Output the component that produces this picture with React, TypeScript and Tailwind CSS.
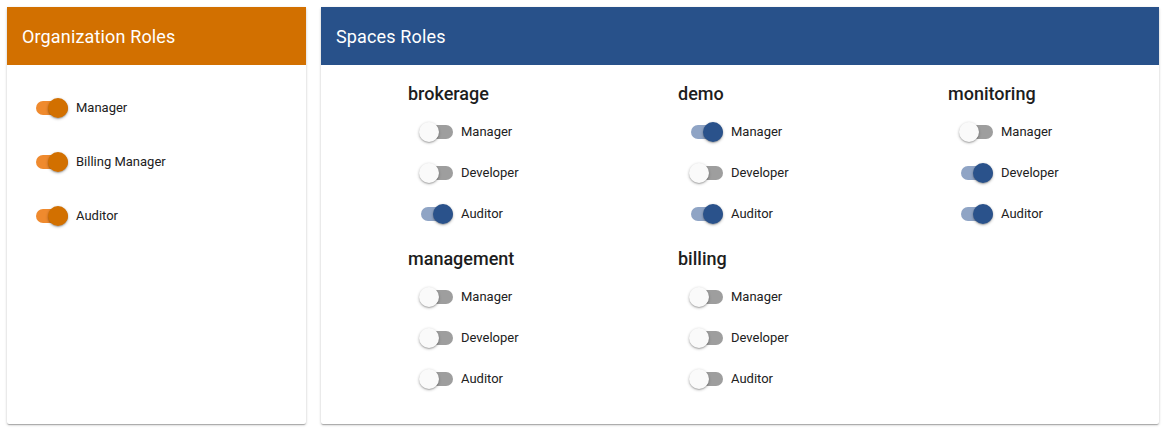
import React from 'react';

type Tone = 'orange' | 'blue';

interface SpaceGroup {
  name: string;
  roles: { label: string; on: boolean }[];
}

const orgRoles = [
  { label: 'Manager', on: true },
  { label: 'Billing Manager', on: true },
  { label: 'Auditor', on: true },
];

const spaces: SpaceGroup[] = [
  {
    name: 'brokerage',
    roles: [
      { label: 'Manager', on: false },
      { label: 'Developer', on: false },
      { label: 'Auditor', on: true },
    ],
  },
  {
    name: 'demo',
    roles: [
      { label: 'Manager', on: true },
      { label: 'Developer', on: false },
      { label: 'Auditor', on: true },
    ],
  },
  {
    name: 'monitoring',
    roles: [
      { label: 'Manager', on: false },
      { label: 'Developer', on: true },
      { label: 'Auditor', on: true },
    ],
  },
  {
    name: 'management',
    roles: [
      { label: 'Manager', on: false },
      { label: 'Developer', on: false },
      { label: 'Auditor', on: false },
    ],
  },
  {
    name: 'billing',
    roles: [
      { label: 'Manager', on: false },
      { label: 'Developer', on: false },
      { label: 'Auditor', on: false },
    ],
  },
];

const Toggle: React.FC<{ on: boolean; tone: Tone }> = ({ on, tone }) => {
  const track = !on
    ? 'bg-[#9e9e9e]'
    : tone === 'orange'
      ? 'bg-[#ef8a2e]'
      : 'bg-[#8fa4c5]';
  const thumb = !on
    ? 'bg-[#fafafa] left-0'
    : tone === 'orange'
      ? 'bg-[#d27000] left-[14px]'
      : 'bg-[#2a528b] left-[14px]';

  return (
    <span className="relative inline-block w-[36px] h-[20px] shrink-0">
      <span className={`absolute left-[2px] top-[3px] w-[32px] h-[14px] rounded-full ${track}`} />
      <span
        className={`absolute top-0 w-[20px] h-[20px] rounded-full shadow-[0_1px_3px_rgba(0,0,0,0.3),0_1px_1px_rgba(0,0,0,0.14)] ${thumb}`}
      />
    </span>
  );
};

const Card: React.FC<{ title: string; color: string; className?: string; children: React.ReactNode }> = ({
  title,
  color,
  className,
  children,
}) => (
  <div className={`bg-white rounded-[2px] shadow-[0_1px_3px_rgba(0,0,0,0.2),0_1px_1px_rgba(0,0,0,0.14),0_2px_1px_-1px_rgba(0,0,0,0.12)] flex flex-col ${className ?? ''}`}>
    <div className={`h-[58px] flex items-center px-[15px] ${color}`}>
      <h2 className="text-[18px] text-white font-normal tracking-[0.15px]">{title}</h2>
    </div>
    {children}
  </div>
);

export default function App() {
  return (
    <div
      className="w-[1168px] h-[435px] bg-white flex gap-[15px] pl-[7px] pr-[9px] pt-[7px] pb-[11px] text-[#212121]"
      style={{ fontFamily: 'Roboto, "Liberation Sans", sans-serif' }}
    >
      <Card title="Organization Roles" color="bg-[#d27000]" className="w-[299px] shrink-0">
        <div className="pt-[16px] pl-[27px] flex flex-col">
          {orgRoles.map((r) => (
            <div key={r.label} className="h-[54px] flex items-center gap-[6px]">
              <Toggle on={r.on} tone="orange" />
              <span className="text-[13px]">{r.label}</span>
            </div>
          ))}
        </div>
      </Card>

      <Card title="Spaces Roles" color="bg-[#28518a]" className="flex-1 min-w-0">
        <div className="pt-[17px] pl-[87px] grid grid-cols-[270px_270px_270px] gap-y-[13px]">
          {spaces.map((s) => (
            <div key={s.name} className="flex flex-col">
              <h3 className="text-[18px] leading-6 font-medium text-[#1d1d1d] mb-[5px]">{s.name}</h3>
              {s.roles.map((r) => (
                <div key={r.label} className="h-[41px] flex items-center gap-[6px] pl-[11px]">
                  <Toggle on={r.on} tone="blue" />
                  <span className="text-[13px]">{r.label}</span>
                </div>
              ))}
            </div>
          ))}
        </div>
      </Card>
    </div>
  );
}
